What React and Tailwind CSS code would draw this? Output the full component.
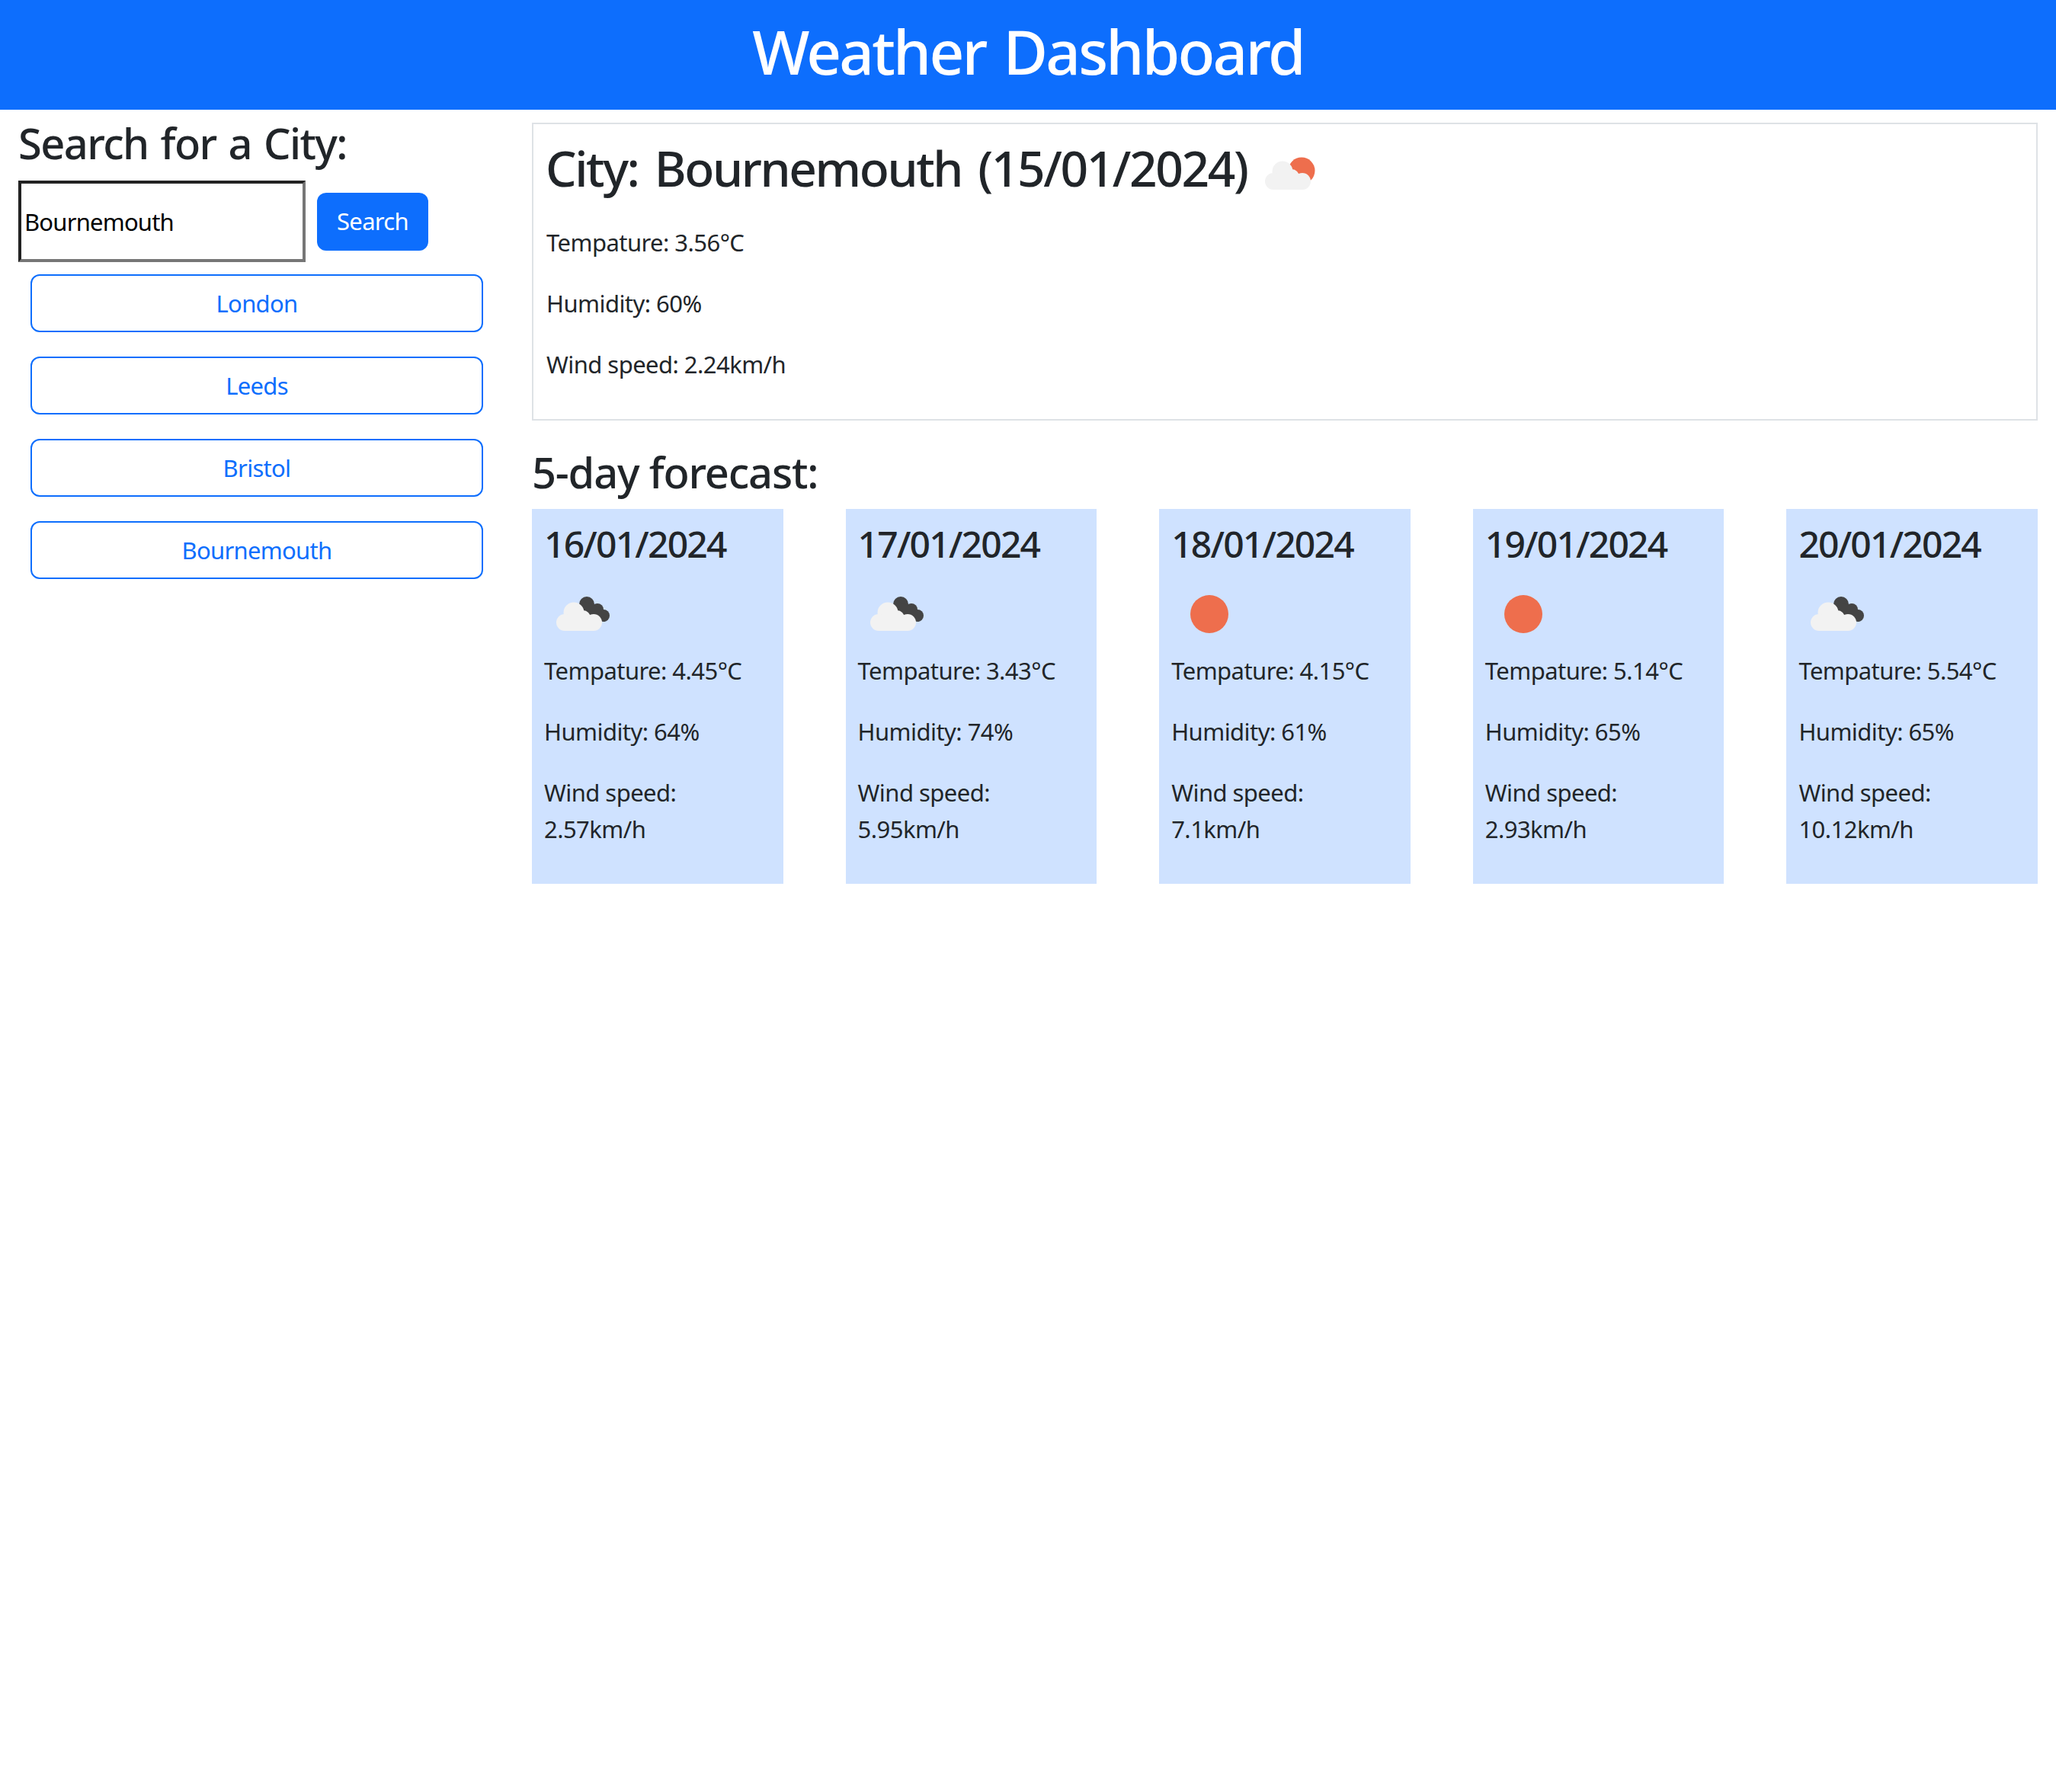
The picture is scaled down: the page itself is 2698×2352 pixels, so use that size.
const cities = ['London', 'Leeds', 'Bristol', 'Bournemouth'];

const forecast = [
  { date: '16/01/2024', icon: 'cloud', temp: '4.45', humidity: '64', wind: '2.57' },
  { date: '17/01/2024', icon: 'cloud', temp: '3.43', humidity: '74', wind: '5.95' },
  { date: '18/01/2024', icon: 'sun', temp: '4.15', humidity: '61', wind: '7.1' },
  { date: '19/01/2024', icon: 'sun', temp: '5.14', humidity: '65', wind: '2.93' },
  { date: '20/01/2024', icon: 'cloud', temp: '5.54', humidity: '65', wind: '10.12' },
];

function WhiteCloud() {
  return (
    <g fill="#f2f2f2">
      <circle cx="39" cy="46" r="13.5" />
      <circle cx="51" cy="53" r="10" />
      <circle cx="27" cy="59" r="11" />
      <circle cx="65" cy="59" r="11" />
      <rect x="27" y="50" width="38" height="20" />
    </g>
  );
}

// the little weather pictures, all drawn on a 100x100 box
function WeatherIcon({ type }) {
  return (
    <svg viewBox="0 0 100 100" className="w-[100px] h-[100px] shrink-0 blur-[0.6px]">
      {type === 'sun' && <circle cx="50" cy="48" r="25" fill="#ee6e4d" />}
      {type === 'cloud' && (
        <>
          <g fill="#444444">
            <circle cx="56" cy="35" r="10" />
            <circle cx="70" cy="42" r="8" />
            <circle cx="78" cy="50" r="8" />
            <polygon points="50,30 78,42 80,58 50,50" />
          </g>
          <WhiteCloud />
        </>
      )}
      {type === 'few' && (
        <>
          <circle cx="64" cy="45" r="17.5" fill="#ee6e4d" />
          <WhiteCloud />
        </>
      )}
    </svg>
  );
}

export default function App() {
  return (
    <div className="min-h-[2352px] bg-white text-[#212529] font-['Noto_Sans',sans-serif]">
      <header className="h-[144px] pb-[10px] bg-[#0d6efd] flex items-center justify-center">
        <h1 className="text-[80px] leading-[96px] font-medium text-white tracking-[-2.8px] [word-spacing:5px]">Weather Dashboard</h1>
      </header>

      <div className="flex">
        <aside className="w-[698px] shrink-0 pl-6 pt-[10px]">
          <h3 className="text-[56px] leading-[67px] font-medium tracking-[-1.6px] [word-spacing:3px] mb-4">Search for a City:</h3>
          <div className="flex items-center gap-[15px]">
            <input
              readOnly
              value="Bournemouth"
              className="w-[377px] h-[107px] px-[4px] text-[31px] text-black bg-white border-4 border-t-[#222222] border-l-[#222222] border-r-[#767676] border-b-[#767676] outline-none tracking-[-0.8px]"
            />
            <button className="h-[76px] w-[146px] rounded-xl bg-[#0d6efd] text-white text-[31px] tracking-[-0.7px]">Search</button>
          </div>
          <div className="mt-4 ml-4 w-[594px] flex flex-col gap-8">
            {cities.map((city) => (
              <button
                key={city}
                className="h-[76px] rounded-xl border-2 border-[#0d6efd] text-[#0d6efd] text-[31px] tracking-[-0.7px]"
              >
                {city}
              </button>
            ))}
          </div>
        </aside>

        <main className="flex-1 pr-6 pt-[17px]">
          <section className="border-2 border-[#dee2e6] p-4 h-[391px]">
            <div className="flex items-start h-[99px] mb-4">
              <h2 className="text-[64px] leading-[84px] font-medium tracking-[-2.4px] [word-spacing:7px]">City: Bournemouth (15/01/2024)</h2>
              <div className="ml-[7px]">
                <WeatherIcon type="few" />
              </div>
            </div>
            <p className="text-[31px] leading-[48px] mb-8 tracking-[-0.55px] pl-[1px]">Tempature: 3.56°C</p>
            <p className="text-[31px] leading-[48px] mb-8 tracking-[-0.55px] pl-[1px]">Humidity: 60%</p>
            <p className="text-[31px] leading-[48px] mb-8 tracking-[-0.55px] pl-[1px]">Wind speed: 2.24km/h</p>
          </section>

          <h3 className="mt-[34px] mb-[15px] text-[56px] leading-[67px] font-medium tracking-[-1.2px]">5-day forecast:</h3>

          <div className="flex justify-between">
            {forecast.map((day) => (
              <div key={day.date} className="w-[329.6px] h-[492px] bg-[#cfe2ff] p-4">
                <h4 className="text-[48px] leading-[60px] font-medium mb-[14px] tracking-[-1.8px]">{day.date}</h4>
                <WeatherIcon type={day.icon} />
                <p className="text-[31px] leading-[48px] -mt-[2px] mb-8 tracking-[-0.55px]">Tempature: {day.temp}°C</p>
                <p className="text-[31px] leading-[48px] mb-8 tracking-[-0.55px]">Humidity: {day.humidity}%</p>
                <p className="text-[31px] leading-[48px] w-[280px] tracking-[-0.55px]">Wind speed: {day.wind}km/h</p>
              </div>
            ))}
          </div>
        </main>
      </div>
    </div>
  );
}
